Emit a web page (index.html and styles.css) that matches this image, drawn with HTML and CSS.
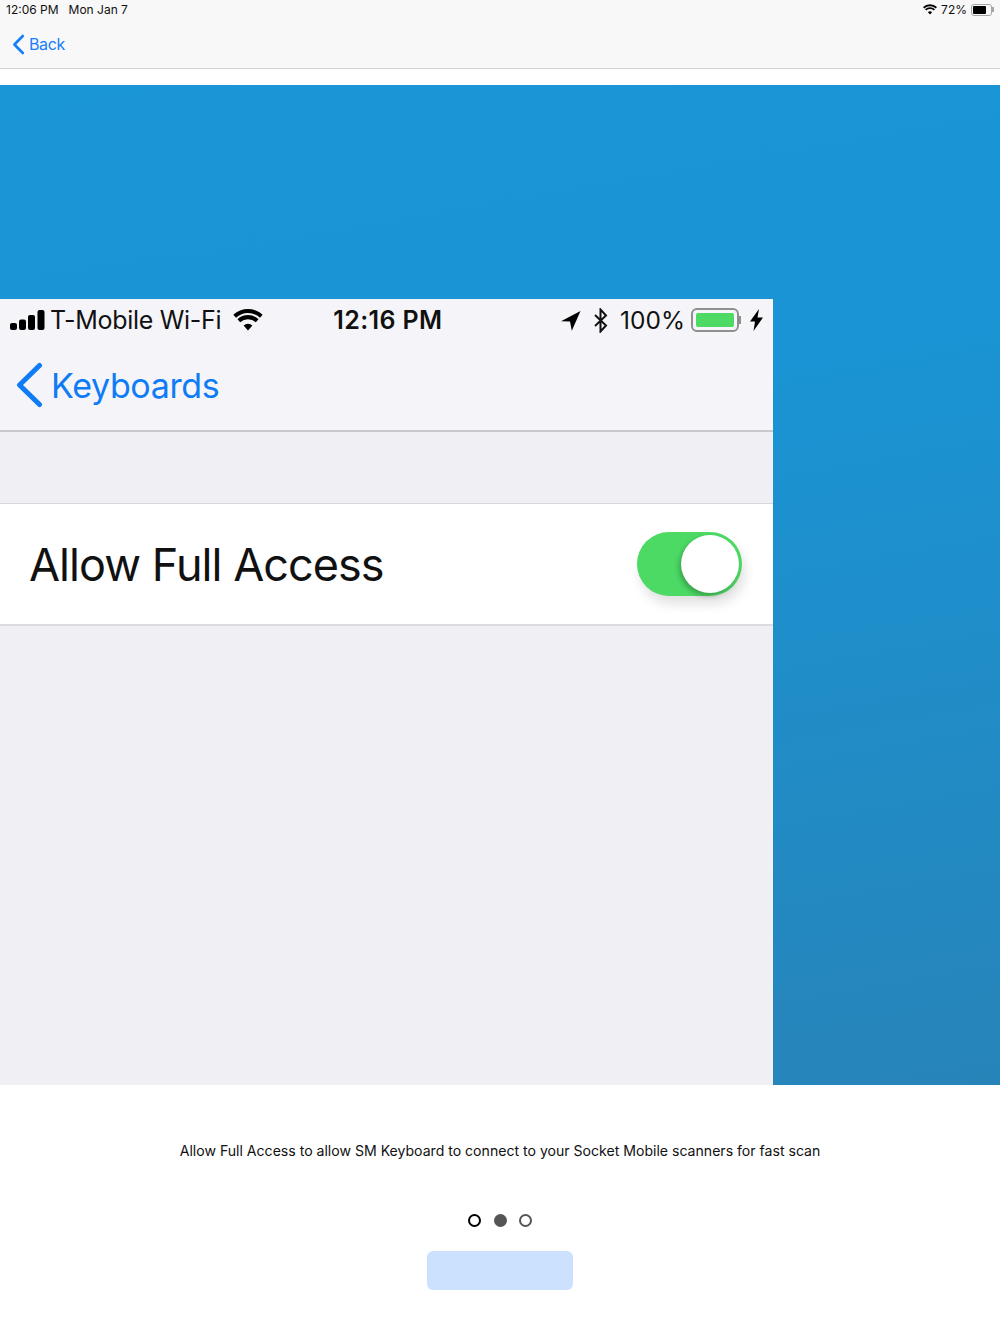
FILE: index.html
```html
<!DOCTYPE html>
<html lang="en">
<head>
  <meta charset="UTF-8" />
  <meta name="viewport" content="width=device-width, initial-scale=1" />
  <title>Allow Full Access</title>
  <link rel="stylesheet" href="styles.css">
</head>
<body>
  <header class="topbar">
    <div class="status">
      <span class="status-time">12:06 PM</span>
      <span class="status-date">Mon Jan 7</span>
      <span class="status-right">
        <svg class="wifi-small" width="14" height="11" viewBox="0 0 24 18"><path d="M12 17.5 8.4 13.6a5.2 5.2 0 0 1 7.2 0zM5.6 10.8 3.4 8.4a12.6 12.6 0 0 1 17.2 0l-2.2 2.4a9.4 9.4 0 0 0-12.800 0zM2.2 7.2 0 4.8a17.6 17.6 0 0 1 24 0l-2.2 2.4a14.4 14.4 0 0 0-19.6 0z"/></svg>
        <span class="status-pct">72%</span>
        <span class="batt-small"><span class="batt-small-fill"></span></span>
        <span class="batt-small-cap"></span>
      </span>
    </div>
    <a class="back" href="#">
      <svg width="13" height="21" viewBox="0 0 13 21"><path d="M10.8 2 2.4 10.5l8.4 8.5" fill="none" stroke="#157efb" stroke-width="2.6" stroke-linecap="round" stroke-linejoin="round"/></svg>
      <span>Back</span>
    </a>
  </header>

  <section class="hero">
    <div class="shot">
      <div class="shot-head">
        <div class="shot-status">
          <svg class="signal" width="35" height="20" viewBox="0 0 35 20"><rect x="0" y="13" width="7" height="7" rx="2"/><rect x="9" y="9.500" width="7" height="10.500" rx="2"/><rect x="18" y="5" width="7" height="15" rx="2"/><rect x="27.500" y="0" width="7" height="20" rx="2"/></svg>
          <span class="carrier">T-Mobile Wi-Fi</span>
          <svg class="wifi" width="30" height="22" viewBox="0 0 24 18"><path d="M12 17.5 8.400 13.600a5.200 5.200 0 0 1 7.200 0zM5.600 10.800 3.400 8.400a12.600 12.600 0 0 1 17.200 0l-2.200 2.400a9.400 9.400 0 0 0-12.800 0zM2.200 7.200 0 4.800a17.600 17.600 0 0 1 24 0l-2.200 2.400a14.400 14.400 0 0 0-19.600 0z"/></svg>
          <span class="clock">12:16 PM</span>
          <span class="shot-right">
            <svg width="21" height="21" viewBox="0 0 21 21"><path d="M20.500 1 1 11.200l9 .4 1.800 9.200z"/></svg>
            <svg class="bt" width="16" height="25" viewBox="0 0 16 25"><path d="M2 7l11 10.500-5.500 6V1.500l5.500 6L2 18" fill="none" stroke="#111" stroke-width="2"/></svg>
            <span class="pct">100%</span>
            <span class="batt"><span class="batt-fill"></span></span>
            <span class="batt-cap"></span>
            <svg width="13" height="22" viewBox="0 0 13 22"><path d="M9 0 0 12.500h5L3.500 22 13 8.500H7.500z"/></svg>
          </span>
        </div>
        <a class="shot-back" href="#">
          <svg width="28" height="46" viewBox="0 0 28 46"><path d="M24.500 3.500 4.500 23l20 19.500" fill="none" stroke="#0f7cf6" stroke-width="5" stroke-linecap="round" stroke-linejoin="round"/></svg>
          <span>Keyboards</span>
        </a>
      </div>
      <div class="shot-row">
        <span>Allow Full Access</span>
        <span class="toggle"><span class="knob"></span></span>
      </div>
    </div>
  </section>

  <p class="caption">Allow Full Access to allow SM Keyboard to connect to your Socket Mobile scanners for fast scan</p>

  <div class="dots">
    <span class="dot dot-first"></span>
    <span class="dot dot-on"></span>
    <span class="dot"></span>
  </div>

  <button class="next" type="button"></button>
</body>
</html>
```

FILE: styles.css
```css
* {
  box-sizing: border-box;
}
body {
  margin: 0;
  height: 1334px;
  background: #fff;
  font-family: Inter, "Liberation Sans", sans-serif;
  color: #111;
  overflow: hidden;
}
a {
  text-decoration: none;
}

/* top bar */
.topbar {
  height: 69px;
  background: #f8f8f8;
  border-bottom: 1px solid #d4d4d4;
}
.status {
  display: flex;
  align-items: center;
  height: 19px;
  padding: 0 6px;
  font-size: 12px;
}
.status-date {
  margin-left: 10px;
}
.status-right {
  display: flex;
  align-items: center;
  gap: 4px;
  margin-left: auto;
}
.batt-small {
  width: 21px;
  height: 12px;
  padding: 1px;
  border: 1px solid #a5a5a5;
  border-radius: 3px;
}
.batt-small-fill {
  display: block;
  width: 78%;
  height: 100%;
  background: #000;
  border-radius: 1px;
}
.batt-small-cap {
  width: 2px;
  height: 5px;
  margin-left: -4px;
  background: #a5a5a5;
}
.back {
  display: flex;
  align-items: center;
  gap: 4px;
  height: 28px;
  margin-top: 11px;
  padding-left: 12px;
  color: #157efb;
  font-size: 16px;
  letter-spacing: -0.4px;
}

/* blue panel */
.hero {
  height: 1000px;
  margin-top: 16px;
  padding-top: 214px;
  background: linear-gradient(170deg, #1a95d6 0%, #1a94d4 35%, #2784b9 100%);
}
.shot {
  display: flex;
  flex-direction: column;
  width: 773px;
  height: 786px;
  background: #efeff4;
}
.shot-head {
  height: 133px;
  background: #f5f5f9;
  border-bottom: 2px solid #c9c9cc;
}
.shot-status {
  display: flex;
  align-items: center;
  height: 42px;
  padding: 0 10px;
  font-size: 25px;
}
.carrier {
  margin-left: 5px;
  letter-spacing: -0.3px;
}
.wifi {
  margin-left: 12px;
}
.clock {
  margin-left: 70px;
  font-weight: 600;
  letter-spacing: 0.4px;
}
.shot-right {
  display: flex;
  align-items: center;
  gap: 9px;
  margin-left: auto;
}
.bt {
  margin-left: 3px;
}
.pct {
  margin-left: 2px;
  font-size: 24.5px;
}
.batt {
  width: 48px;
  height: 24px;
  padding: 3px;
  margin-left: -3px;
  border: 2px solid #8f8f8f;
  border-radius: 6px;
}
.batt-fill {
  display: block;
  height: 100%;
  background: #4cd964;
  border-radius: 2px;
}
.batt-cap {
  width: 2px;
  height: 8px;
  margin-left: -9px;
  background: #8f8f8f;
}
.shot-back {
  display: flex;
  align-items: center;
  gap: 8px;
  height: 46px;
  margin-top: 21px;
  padding-left: 15px;
  color: #0f7cf6;
  font-size: 34px;
  letter-spacing: -0.35px;
}
.shot-row {
  display: flex;
  align-items: center;
  justify-content: space-between;
  height: 123px;
  margin-top: 71px;
  padding: 0 31px 0 29px;
  background: #fff;
  border-top: 1px solid #d8d8dc;
  border-bottom: 2px solid #dcdce0;
  font-size: 45px;
  letter-spacing: -0.95px;
}
.toggle {
  display: flex;
  justify-content: flex-end;
  width: 105px;
  height: 64px;
  padding: 3px;
  background: #4cd964;
  border-radius: 32px;
  box-shadow: 3px 8px 12px rgba(0, 0, 0, 0.12);
}
.knob {
  width: 58px;
  height: 58px;
  background: #fff;
  border-radius: 50%;
  box-shadow: -2px 3px 5px rgba(0, 0, 0, 0.25);
}

/* bottom */
.caption {
  margin: 57px 0 0;
  font-size: 14.08px;
  line-height: 18px;
  text-align: center;
}
.dots {
  display: flex;
  justify-content: center;
  gap: 12.5px;
  margin-top: 54px;
}
.dot {
  width: 13px;
  height: 13px;
  border: 2px solid #555;
  border-radius: 50%;
}
.dot-first {
  border-color: #000;
}
.dot-on {
  background: #555;
}
.next {
  display: block;
  width: 146px;
  height: 39px;
  margin: 24px auto 0;
  background: #cce1fd;
  border: none;
  border-radius: 6px;
}
```
